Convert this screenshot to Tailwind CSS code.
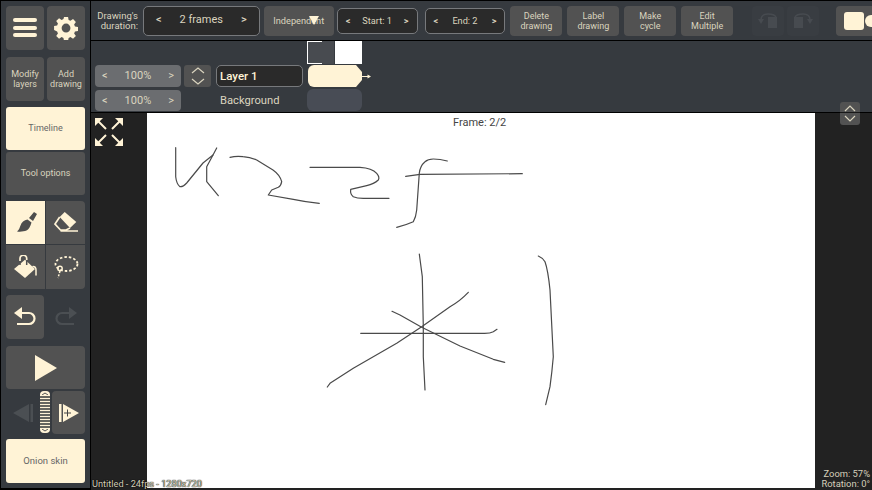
<!DOCTYPE html>
<html lang="en">
<head>
    <meta charset="UTF-8">
    <meta name="viewport" content="width=device-width, initial-scale=1.0">
    <title>Untitled</title>
    <script src="https://cdn.jsdelivr.net/npm/@tailwindcss/browser@4"></script>
</head>
<body class="bg-[#222222] overflow-hidden font-['Roboto',sans-serif]">
<div class="relative flex h-[490px] w-[872px] overflow-hidden">
    <!-- left toolbar -->
    <aside class="flex h-full w-[91px] shrink-0 flex-col border-x border-t border-b-2 border-x-black border-t-black border-b-black bg-[#363a3f] pl-[5px] pt-[5px] text-[#dad4bf]">
        <div class="flex gap-[3px]">
            <button class="flex h-[44px] w-[38px] items-center justify-center rounded-[4px] bg-[#525252]">
                <svg width="26" height="22" viewBox="0 0 26 22"><g fill="#fff3d6"><rect x="1" y="1" width="24" height="4" rx="2"/><rect x="1" y="9" width="24" height="4" rx="2"/><rect x="1" y="16" width="24" height="4" rx="2"/></g></svg>
            </button>
            <button class="flex h-[44px] w-[38px] items-center justify-center rounded-[4px] bg-[#525252]">
                <svg width="24" height="24" viewBox="0 0 24 24"><path fill="#fff3d6" fill-rule="evenodd" d="M9.8 0h4.4l.6 3.3 2 .9 2.8-1.900 3.100 3.100-1.900 2.800.9 2 3.300.6v4.400l-3.300.6-.9 2 1.900 2.800-3.100 3.100-2.800-1.900-2 .9-.6 3.300H9.800l-.6-3.300-2-.9-2.800 1.900-3.100-3.100 1.900-2.800-.9-2L-1 14.200V9.800l3.300-.6.9-2L1.300 4.400l3.100-3.100 2.800 1.900 2-.9zM12 7.200a4.800 4.800 0 1 0 0 9.600 4.800 4.800 0 0 0 0-9.600z" transform="translate(1 1) scale(.92)"/></svg>
            </button>
        </div>
        <div class="mt-[7px] flex gap-[3px] text-[9px] leading-[10px]">
            <button class="h-[44px] w-[38px] rounded-[4px] bg-[#525252]">Modify<br>layers</button>
            <button class="h-[44px] w-[38px] rounded-[4px] bg-[#525252]">Add<br>drawing</button>
        </div>
        <button class="mt-[6px] h-[43px] w-[79px] rounded-[3px] bg-[#fff3d6] text-[9px] text-[#666666]">Timeline</button>
        <button class="mt-[2px] h-[43px] w-[79px] rounded-[3px] bg-[#525252] text-[9px]">Tool options</button>
        <div class="mt-[6px] grid w-[79px] grid-cols-2 gap-x-px gap-y-px">
            <button class="flex h-[43px] items-center justify-center bg-[#fff3d6]">
                <svg width="24" height="24" viewBox="0 0 24 24"><path fill="#4d4d4d" d="M15 7l5-6 3 2-4 7zM13.500 8.500l4 3c-1 4-3 7-5 8-2.500 1-6 1.500-9.500 1 2-1.500 2.500-3.500 3.500-6 1-3 3.500-5.500 7-6z"/></svg>
            </button>
            <button class="flex h-[43px] items-center justify-center rounded-tr-[4px] bg-[#525252]">
                <svg width="24" height="21" viewBox="0 0 24 21"><path fill="#fff3d6" d="M10.700 0l11.600 10-6.300 6L5.700 5z"/><path fill="none" stroke="#fff3d6" stroke-width="1.700" d="M5.700 5L1 12l5.500 6H12l4-2M6.500 19H24"/></svg>
            </button>
            <button class="flex h-[44px] items-center justify-center rounded-bl-[4px] bg-[#525252]">
                <svg width="24" height="24" viewBox="0 0 24 24"><path fill="#fff3d6" d="M0 14l11-9.300L21 14l-10 9z"/><path fill="none" stroke="#fff3d6" stroke-width="1.500" stroke-linecap="round" d="M19 11.500c2.500 0 3 2 3 3.500v5"/><path fill="none" stroke="#fff3d6" stroke-width="1.700" d="M6 6V3.500a3.300 3.300 0 0 1 6.700 0V5"/><path fill="none" stroke="#525252" stroke-width="1.500" d="M6 6v4M12.700 6v4"/></svg>
            </button>
            <button class="flex h-[44px] items-center justify-center rounded-br-[4px] bg-[#525252]">
                <svg width="26" height="24" viewBox="0 0 26 24"><ellipse cx="13.500" cy="9" rx="11" ry="7" fill="none" stroke="#fff3d6" stroke-width="1.800" stroke-dasharray="2.500 2"/><circle cx="7" cy="13.500" r="2.200" fill="none" stroke="#fff3d6" stroke-width="1.500"/><path stroke="#fff3d6" stroke-width="1.500" stroke-dasharray="2 1.500" d="M7 16l-2 7"/></svg>
            </button>
        </div>
        <div class="mt-[6px] flex gap-[3px]">
            <button class="flex h-[44px] w-[38px] items-center justify-center rounded-[4px] bg-[#525252]">
                <svg width="22" height="20" viewBox="0 0 22 20"><path fill="none" stroke="#fff3d6" stroke-width="2.200" d="M6 6h9a5 5 0 0 1 0 11H3"/><path fill="#fff3d6" d="M8 0v12L0 6z"/></svg>
            </button>
            <button class="flex h-[44px] w-[38px] items-center justify-center">
                <svg width="22" height="20" viewBox="0 0 22 20"><path fill="none" stroke="#4b4f53" stroke-width="2.200" d="M16 6H7a5 5 0 0 0 0 11h12"/><path fill="#4b4f53" d="M14 0v12l8-6z"/></svg>
            </button>
        </div>
        <button class="mt-[7px] flex h-[43px] w-[79px] items-center justify-center rounded-[4px] bg-[#525252]">
            <svg width="24" height="28" viewBox="0 0 24 28"><path fill="#fff3d6" d="M1 1l22 13L1 27z"/></svg>
        </button>
        <div class="mt-[2px] flex h-[43px] w-[79px]">
            <div class="flex w-[34px] items-center justify-center">
                <svg width="20" height="18" viewBox="0 0 20 18"><path fill="#4b4f53" d="M16 0v18L0 9zM17.500 0h2.500v18h-2.500z"/></svg>
            </div>
            <div class="flex h-[42px] w-[10px] flex-col items-center gap-px overflow-hidden rounded-[4px] bg-[#fff3d6] py-px">
                <svg width="8" height="3" viewBox="0 0 8 3"><path fill="none" stroke="#555555" d="M1 3l3-2 3 2"/></svg>
                <div class="h-[2px] w-[10px] bg-[#66665f]"></div>
                <div class="h-[2px] w-[10px] bg-[#66665f]"></div>
                <div class="h-[2px] w-[10px] bg-[#66665f]"></div>
                <div class="h-[2px] w-[10px] bg-[#66665f]"></div>
                <div class="h-[2px] w-[10px] bg-[#66665f]"></div>
                <div class="h-[2px] w-[10px] bg-[#66665f]"></div>
                <div class="h-[2px] w-[10px] bg-[#66665f]"></div>
                <div class="h-[2px] w-[10px] bg-[#66665f]"></div>
                <div class="h-[2px] w-[10px] bg-[#66665f]"></div>
                <div class="h-[2px] w-[10px] bg-[#66665f]"></div>
                <div class="h-[2px] w-[10px] bg-[#66665f]"></div>
                <svg width="8" height="3" viewBox="0 0 8 3"><path fill="none" stroke="#555555" d="M1 0l3 2 3-2"/></svg>
            </div>
            <button class="ml-[2px] flex h-[43px] w-[33px] items-center justify-center rounded-[4px] bg-[#525252]">
                <svg width="20" height="18" viewBox="0 0 20 18"><path fill="#fff3d6" d="M0 0h2.500v18H0zM4 0l16 9-16 9z"/><path stroke="#444444" stroke-width="1" d="M5 9h7M8.500 5.500v7"/></svg>
            </button>
        </div>
        <button class="mt-[5px] h-[44px] w-[79px] rounded-[3px] bg-[#fff3d6] text-[9.5px] text-[#666666]">Onion skin</button>
    </aside>

    <div class="flex h-full min-w-0 flex-1 flex-col">
        <!-- top bar -->
        <div class="flex h-[41px] shrink-0 items-center border-y border-y-black bg-[#363a3f] pl-[6px] text-[#dad4bf]">
            <div class="w-[41px] text-right text-[9.500px] leading-[10px]">Drawing's<br>duration:</div>
            <div class="ml-[5px] flex h-[30px] w-[117px] items-center justify-between rounded-[5px] border border-[#77797c] bg-[#2a2a2a] px-[12px] text-[11px]"><span class="font-medium">&lt;</span><span>2 frames</span><span class="font-medium">&gt;</span></div>
            <div class="relative ml-[4px] flex h-[30px] w-[70px] items-center justify-center rounded-[4px] bg-[#525252] text-[9.200px]">
                Independent
                <svg class="absolute left-[45px] top-[10px]" width="10" height="9" viewBox="0 0 10 9"><path fill="#fff3d6" d="M0 0h10L5 9z"/></svg>
            </div>
            <div class="ml-[3px] flex h-[26px] w-[81px] items-center justify-between rounded-[5px] border border-[#77797c] bg-[#2a2a2a] px-[8px] text-[9.200px]"><span class="font-bold">&lt;</span><span>Start: 1</span><span class="font-bold">&gt;</span></div>
            <div class="ml-[7px] flex h-[26px] w-[81px] items-center justify-between rounded-[5px] border border-[#77797c] bg-[#2a2a2a] px-[8px] text-[9.200px]"><span class="font-bold">&lt;</span><span>End: 2</span><span class="font-bold">&gt;</span></div>
            <button class="ml-[5px] h-[30px] w-[52px] rounded-[4px] bg-[#525252] text-[9px] leading-[10px]">Delete<br>drawing</button>
            <button class="ml-[5px] h-[30px] w-[52px] rounded-[4px] bg-[#525252] text-[9px] leading-[10px]">Label<br>drawing</button>
            <button class="ml-[5px] h-[30px] w-[52px] rounded-[4px] bg-[#525252] text-[9px] leading-[10px]">Make<br>cycle</button>
            <button class="ml-[5px] h-[30px] w-[52px] rounded-[4px] bg-[#525252] text-[9px] leading-[10px]">Edit<br>Multiple</button>
            <button class="ml-[19px] flex h-[30px] w-[32px] items-center justify-center rounded-[4px] bg-[#393d42]">
                <svg width="22" height="16" viewBox="0 0 22 16"><path fill="#474b50" d="M11 4h9v11h-9zM1 6l3 5 3-5z"/><path fill="none" stroke="#474b50" stroke-width="1.500" d="M4 7c0-4 3-6 7-6s7 1 8 3"/></svg>
            </button>
            <button class="ml-[3px] flex h-[30px] w-[32px] items-center justify-center rounded-[4px] bg-[#393d42]">
                <svg width="22" height="16" viewBox="0 0 22 16"><path fill="#474b50" d="M2 4h9v11H2zM15 6l3 5 3-5z"/><path fill="none" stroke="#474b50" stroke-width="1.500" d="M18 7c0-4-3-6-7-6S4 2 3 4"/></svg>
            </button>
            <button class="ml-[17px] flex h-[30px] w-[36px] shrink-0 items-center rounded-l-[4px] bg-[#525252] pl-[8px]">
                <div class="h-[18px] w-[20px] rounded-[3px] bg-[#fff3d6]"></div>
                <div class="ml-[1px] h-[12px] w-[7px] rounded-l-full bg-[#fff3d6]"></div>
            </button>
        </div>

        <!-- layers row -->
        <div class="flex h-[72px] shrink-0 border-b border-b-black bg-[#363a3f] text-[#dad4bf]">
            <div class="ml-[4px] mt-[24px] flex w-[86px] flex-col gap-[3px] text-[11px]">
                <div class="flex h-[22px] items-center justify-between rounded-[4px] bg-[#6b6d70] px-[7px] pt-px"><span>&lt;</span><span>100%</span><span>&gt;</span></div>
                <div class="flex h-[21px] items-center justify-between rounded-[4px] bg-[#6b6d70] px-[7px] pt-px"><span>&lt;</span><span>100%</span><span>&gt;</span></div>
            </div>
            <button class="ml-[3px] mt-[24px] flex h-[22px] w-[27px] items-center justify-center rounded-[3px] bg-[#525252]">
                <svg width="14" height="18" viewBox="0 0 14 18"><path fill="none" stroke="#dad4bf" stroke-width="1.200" d="M1 6l6-5 6 5M1 12l6 5 6-5"/></svg>
            </button>
            <div class="ml-[5px] mt-[24px] w-[87px]">
                <div class="flex h-[22px] items-center rounded-[5px] border border-[#77797c] bg-[#2a2a2a] pl-[3px] pt-[2px] text-[11.500px] font-medium text-[#fff3d6]">Layer 1</div>
                <div class="mt-[3px] flex h-[21px] items-center pl-[4px] pt-[2px] text-[11.200px]">Background</div>
            </div>
            <div class="ml-[4px] w-[55px]">
                <div class="flex h-[23px]">
                    <div class="relative h-[23px] w-[27px] border-l border-l-white bg-[#484b50]">
                        <div class="absolute left-0 top-0 h-px w-[14px] bg-white"></div>
                        <div class="absolute bottom-0 left-0 h-px w-[14px] bg-white"></div>
                    </div>
                    <div class="ml-px h-[23px] w-[27px] bg-white"></div>
                </div>
                <div class="relative ml-px mt-px h-[22px] w-[54px] rounded-l-[6px] bg-[#fff3d6] [clip-path:polygon(0_0,48px_0,54px_7px,54px_15px,48px_22px,0_22px)]"></div>
                <div class="mt-[2px] h-[22px] w-[55px] rounded-[6px] bg-[#484c55]"></div>
            </div>
            <svg class="mt-[32px]" width="9" height="7" viewBox="0 0 9 7"><path fill="#fff3d6" d="M0 3h5.500V1.500L9 3.500l-3.500 2V4H0z"/></svg>
        </div>

        <!-- canvas -->
        <div class="relative flex min-h-0 flex-1 pb-[2px] pl-[56px]">
            <div class="relative h-full w-[668px] bg-white">
                <svg class="absolute inset-0" width="668" height="375" viewBox="147 113 668 375" fill="none" stroke="#4a4a4a" stroke-width="1.200" stroke-linecap="round" stroke-linejoin="round">
                    <path d="M175.700 147.700L175.700 176.700Q176.500 184 180 186.700Q183 187 186.700 183L203 163L213 155L216.700 148"/>
                    <path d="M213 155L206.700 166.700L206.700 181.700L218.300 195.700"/>
                    <path d="M230 157.300Q236 156 243 156.700Q250 157 256.700 160L273 170Q280 175 281.700 181.700Q281 186 278.300 187.300L271.700 190L268.300 195L293.300 199.300Q306 202 319.300 203.300"/>
                    <path d="M310 167.300L360 167.300Q372 168 376.700 173.300Q380 177 378.300 180Q374 184 366.700 185.700L350.700 189.300Q350 194 353.300 196.700Q357 198.300 363.300 198.300L389 198.300"/>
                    <path d="M447.300 161Q440 159 433.300 159Q428 159 425 161.700Q420 166 419.300 173.300L416.700 210Q416 217 413.300 221.700Q406 225 396.700 227.300"/>
                    <path d="M405.700 176.300L420 174.300L522.300 173.700"/>
                    <path d="M419.300 254L422.300 276.700L423.300 326.700L423.300 356.700L425 390"/>
                    <path d="M468.300 292.300Q460 301 450 306.700L421.700 326.700L396.700 343.300L353.300 368.300L330 383.300L327.300 387"/>
                    <path d="M392 311.300L400 315L421.700 327.300L460 346L493.300 359.300L504.700 362.300"/>
                    <path d="M360.700 333.300L483.300 333.300Q490 333.500 493.300 331.700L497 329.300"/>
                    <path d="M538.300 256Q543 258 545 261.700Q548 270 550 290L553.300 356.700Q552 372 550 386.700L545.700 404.700"/>
                </svg>
                <div class="absolute left-[306px] top-[3px] text-[11px] leading-[13px] text-[#444444]">Frame: 2/2</div>
            </div>
            <svg class="absolute left-[4px] top-[5px]" width="28" height="28" viewBox="0 0 28 28" fill="#fff3d6" stroke="none">
                <path d="M0 0h8L0 8zM28 0h-8l8 8zM0 28h8L0 20zM28 28h-8l8-8z"/>
                <path fill="none" stroke="#fff3d6" stroke-width="2" d="M2 2l9 9M26 2l-9 9M2 26l9-9M26 26l-9-9"/>
            </svg>
            <div class="absolute bottom-[1px] left-px text-[9.200px] leading-[11px] text-[#d6d0bb] [text-shadow:0_0_1px_#000,0_0_1px_#000]">Untitled - 24fps - 1280x720</div>
            <div class="absolute bottom-[1px] right-[2px] text-right text-[9.400px] leading-[10px] text-[#d6d0bb]">Zoom: 57%<br>Rotation: 0°</div>
        </div>
    </div>

    <!-- overlaps the bottom edge of the layers row -->
    <button class="absolute left-[840px] top-[102px] flex h-[23px] w-[20px] items-center justify-center rounded-[3px] bg-[#525252]">
        <svg width="14" height="19" viewBox="0 0 14 19"><path fill="none" stroke="#dad4bf" stroke-width="1.200" d="M2 7l5-5 5 5M2 12l5 5 5-5"/></svg>
        <span class="absolute left-0 top-[10px] h-px w-[20px] bg-black/70"></span>
    </button>
</div>
</body>
</html>
